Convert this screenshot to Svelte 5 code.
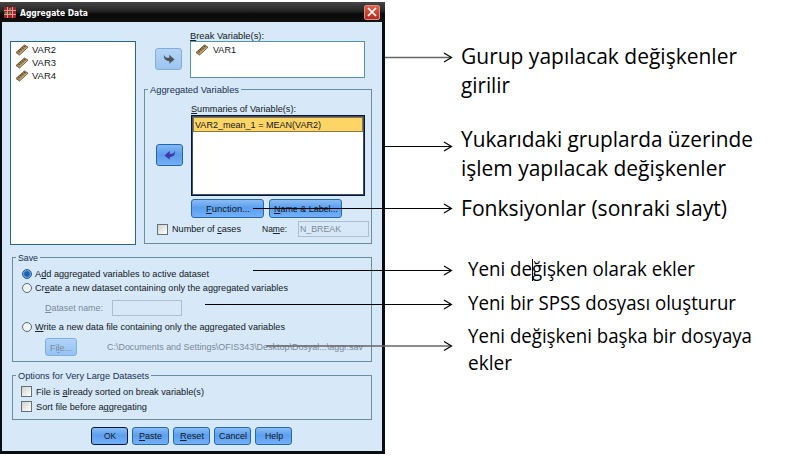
<script>
  const files = ['VAR2', 'VAR3', 'VAR4'];
  const actions = [
    { text: 'OK', width: 12, primary: true },
    { text: '~Paste', width: 23 },
    { text: '~Reset', width: 24 },
    { text: 'Cancel', width: 28 },
    { text: 'Help', width: 18 }
  ];
  const arrows = [
    { y: 57.5, from: 385, soft: true },
    { y: 146.5, from: 385 },
    { y: 208.5, from: 253 },
    { y: 270.5, from: 253 },
    { y: 304.5, from: 205 },
    { y: 346, from: 266, soft: true }
  ];
  // "~" marks the letter that is the keyboard mnemonic
  function split(text) {
    const i = text.indexOf('~');
    return i < 0 ? [text, '', ''] : [text.slice(0, i), text[i + 1], text.slice(i + 2)];
  }
</script>

{#snippet label(text, width)}
  {@const p = split(text)}
  <svg class="label" {width} height="12"><text x="0" y="9" textLength={width} lengthAdjust="spacingAndGlyphs">{p[0]}<tspan class="key">{p[1]}</tspan>{p[2]}</text></svg>
{/snippet}

{#snippet note(text, width)}
  <svg class="note" {width} height="29"><text x="0" y="22" textLength={width} lengthAdjust="spacingAndGlyphs">{text}</text></svg>
{/snippet}

{#snippet ruler()}
  <svg class="ruler" width="14" height="12" viewBox="0 0 14 12">
    <path d="M1 8.5 9.5 1 13 3.2 4.5 11Z" fill="#a88a58" stroke="#65502f" stroke-width=".9" />
    <path d="M3.2 6.8l1.7 1M5 5.2l1.7 1M6.8 3.6l1.7 1M8.6 2l1.7 1" stroke="#3f301c" stroke-width=".8" />
    <path d="M4.6 9.6 12 3.3" stroke="#d9c497" stroke-width=".8" />
  </svg>
{/snippet}

<div class="page">
  <div class="dialog">
    <div class="title">
      <svg width="12" height="11" viewBox="0 0 12 11">
        <rect width="12" height="11" fill="#a3202b" />
        <path d="M0 3.5h12M0 7.5h12M3.5 0v11M8.5 0v11" stroke="#e9a0a0" stroke-width=".9" />
        <path d="M5 1h2v2H5zM5 5h2v2H5zM1 5h2v2H1z" fill="#45a443" />
      </svg>
      <svg class="caption" width="68" height="14"><text x="0" y="10.5" textLength="68" lengthAdjust="spacingAndGlyphs">Aggregate Data</text></svg>
      <div class="close">
        <svg width="10" height="10" viewBox="0 0 10 10"><path d="M1 1l8 8M9 1L1 9" stroke="#fff" stroke-width="1.7" /></svg>
      </div>
    </div>

    <div class="top">
      <div class="list">
        {#each files as name}
          <div class="item">{@render ruler()}{@render label(name, 24)}</div>
        {/each}
      </div>
      <div class="right">
        <div class="break">
          <div class="move idle">
            <svg width="14" height="12" viewBox="0 0 14 12"><path d="M2 1.5C2.5 4.3 4.3 5 7.3 4.8V1.8L12.5 6.5 7.3 10.8V8C3.6 8 1.3 5.6 2 1.5Z" fill="#4c5560" /></svg>
          </div>
          <div class="stack">
            {@render label('~Break Variable(s):', 74)}
            <div class="breakbox">{@render ruler()}{@render label('VAR1', 23)}</div>
          </div>
        </div>
        <div class="group agg">
          <div class="legend">{@render label('Aggregated Variables', 89)}</div>
          <div class="summary">
            <div class="move">
              <svg width="14" height="12" viewBox="0 0 14 12"><path d="M12 1.5C11.5 4.3 9.7 5 6.7 4.8V1.8L1.5 6.5 6.7 10.8V8C10.4 8 12.7 5.6 12 1.5Z" fill="#4438a8" /></svg>
            </div>
            <div class="stack">
              {@render label('~Summaries of Variable(s):', 105)}
              <div class="sumbox"><div class="selected">{@render label('VAR2_mean_1 = MEAN(VAR2)', 126)}</div></div>
              <div class="pair">
                <div class="button wide">{@render label('~Function...', 44)}</div>
                <div class="button wide">{@render label('~Name & Label...', 64)}</div>
              </div>
            </div>
          </div>
          <div class="cases">
            <i class="check"></i>
            {@render label('Number of ~cases', 69)}
            <span class="name">{@render label('Na~me:', 25)}</span>
            <div class="field nbreak">{@render label('N_BREAK', 41)}</div>
          </div>
        </div>
      </div>
    </div>

    <div class="group save">
      <div class="legend">{@render label('Save', 20)}</div>
      <div class="row first"><i class="radio on"></i>{@render label('A~dd aggregated variables to active dataset', 174)}</div>
      <div class="row second"><i class="radio"></i>{@render label('Cr~eate a new dataset containing only the aggregated variables', 253)}</div>
      <div class="row dataset muted">{@render label('~Dataset name:', 58)}<div class="field blank"></div></div>
      <div class="row third"><i class="radio"></i>{@render label('~Write a new data file containing only the aggregated variables', 250)}</div>
      <div class="row path muted">
        <div class="button file">{@render label('Fi~le...', 22)}</div>
        {@render label('C:\\Documents and Settings\\OFIS343\\Desktop\\Dosyal...\\aggr.sav', 256)}
      </div>
    </div>

    <div class="group options">
      <div class="legend">{@render label('Options for Very Large Datasets', 131)}</div>
      <div class="row"><i class="check"></i>{@render label('File is ~already sorted on break variable(s)', 168)}</div>
      <div class="row"><i class="check"></i>{@render label('Sort file before a~ggregating', 111)}</div>
    </div>

    <div class="actions">
      {#each actions as a}
        <div class="button" class:primary={a.primary}>{@render label(a.text, a.width)}</div>
      {/each}
    </div>
  </div>

  <div class="notes">
    <div class="big">
      {@render note('Gurup yapılacak değişkenler', 276)}
      {@render note('girilir', 49)}
    </div>
    <div class="big second">
      {@render note('Yukarıdaki gruplarda üzerinde', 292)}
      {@render note('işlem yapılacak değişkenler', 265)}
    </div>
    <div class="big third">{@render note('Fonksiyonlar (sonraki slayt)', 266)}</div>
    <div class="small one">{@render note('Yeni değişken olarak ekler', 227)}</div>
    <div class="small two">{@render note('Yeni bir SPSS dosyası oluşturur', 268)}</div>
    <div class="small three">
      {@render note('Yeni değişkeni başka bir dosyaya', 284)}
      {@render note('ekler', 44)}
    </div>
  </div>

  <svg class="overlay" width="786" height="460" viewBox="0 0 786 460" fill="none">
    {#each arrows as a}
      <path d="M{a.from} {a.y}H451" stroke={a.soft ? '#666' : '#000'} stroke-width={a.soft ? 1.5 : 1} />
      <path d="M444 {a.y - 4.5}L451.5 {a.y}L444 {a.y + 4.5}" stroke="#000" stroke-width="1.2" />
    {/each}
    <path d="M532.5 259v22" stroke="#000" />
  </svg>
</div>

<style>
  .page { position: relative; display: flex; width: 786px; height: 460px; background: #fff; overflow: hidden; }
  .page, .page div, .page i { box-sizing: border-box; }
  svg { display: block; flex: none; overflow: visible; }
  .label { font: 9.4px 'Liberation Sans', Arial, sans-serif; fill: #111820; }
  .key { text-decoration: underline; }
  .muted .label, .nbreak .label { fill: #7b8995; }
  .dialog { width: 385px; height: 452px; margin-top: 2px; flex: none; background: #d7e8f9; border: solid #080d14; border-width: 0 3px 3px 2px; }
  .title { display: flex; align-items: center; height: 20px; margin: 0 -3px 0 -2px; padding: 0 5px 0 4px; background: linear-gradient(#464646, #252525 45%, #090909 60%, #111); }
  .caption { margin-left: 4px; font: bold 9px 'DejaVu Sans', sans-serif; fill: #fff; }
  .close { display: flex; align-items: center; justify-content: center; width: 16px; height: 15px; margin-left: auto; border: 1px solid #de8b80; border-radius: 2px; background: linear-gradient(#d9644f, #b62b20); }
  .top { display: flex; padding-left: 8px; height: 235px; }
  .list { width: 126px; height: 204px; margin-top: 19px; padding: 1px 0 0 4px; background: #fff; border: 1px solid #27678a; }
  .item { display: flex; align-items: center; height: 13px; gap: 3px; }
  .right { margin-left: 8px; width: 228px; }
  .break { display: flex; height: 67px; padding: 8px 0 0 11px; }
  .break .stack { margin-left: 8px; }
  .break .label { margin-bottom: -1px; }
  .move { display: flex; align-items: center; justify-content: center; width: 27px; height: 22px; border: 1px solid #2466ae; border-radius: 3px; background: linear-gradient(#82b8f3, #5b9cec 50%, #75b0f5); }
  .idle { margin-top: 18px; border-color: #82add6; background: linear-gradient(#b5d4f5, #9cc5f1); }
  .breakbox { display: flex; align-items: flex-start; width: 175px; height: 37px; margin-top: 0; padding: 2px 0 0 4px; gap: 4px; background: #fff; border: 1px solid #5692a9; }
  .group { display: flow-root; border: 1px solid #688f9f; }
  .legend { width: fit-content; margin: -6px 0 0 3px; padding: 0 2px; height: 12px; background: #d7e8f9; }
  .legend .label { fill: #17314e; }
  .agg { width: 228px; height: 155px; }
  .summary { display: flex; margin: 7px 0 0 11px; }
  .summary .move { margin-top: 41px; }
  .summary .stack { margin-left: 8px; }
  .sumbox { width: 174px; height: 81px; padding: 1px 1px 0; margin-top: 0; background: #fff; border: 1px solid #0b1434; box-shadow: inset 0 0 0 1px #405070; }
  .selected { height: 15px; padding: 1px; background: #fcd566; border: 1px solid #8b783d; }
  .pair { display: flex; gap: 5px; margin-top: 3px; }
  .button { display: flex; align-items: center; justify-content: center; width: 37px; height: 18px; border: 1px solid #2569ad; border-radius: 3px; background: linear-gradient(#8abcf5, #5c9fef 45%, #73b0f8); }
  .wide { width: 73px; height: 19px; }
  .primary { border-color: #061a3c; }
  .cases { display: flex; align-items: center; margin: 3px 0 0 12px; height: 16px; }
  .check { width: 11px; height: 11px; flex: none; margin-right: 4px; background: linear-gradient(135deg, #d2d2ca, #fff); border: 1px solid #65717a; }
  .name { margin-left: 21px; }
  .field { border: 1px solid #a9bfd2; }
  .nbreak { width: 71px; height: 16px; margin-left: 11px; padding: 1px; }
  .save, .options { width: 360px; margin-left: 10px; }
  .save { height: 105px; }
  .row { display: flex; align-items: center; height: 14px; margin-left: 9px; }
  .radio { width: 10px; height: 10px; flex: none; margin-right: 3px; border-radius: 50%; background: #f3f5f5; border: 1.5px solid #526a83; }
  .on { background: radial-gradient(#1d63b5 0 40%, #81b8f0 70%); border-color: #2a5688; }
  .save .first { margin-top: 3px; }
  .dataset { margin: 5px 0 0 32px; height: 16px; }
  .blank { width: 70px; height: 16px; margin-left: 9px; }
  .third { margin-top: 4px; }
  .path { margin: 4px 0 0 32px; height: 18px; }
  .file { width: 32px; margin-right: 30px; border-color: #7dafe0; background: linear-gradient(#b1d3f8, #94c2f4); }
  .file .label { margin-top: 1px; }
  .options { height: 45px; margin-top: 13px; }
  .options .row { height: 15px; margin-left: 8px; }
  .options .legend + .row { margin-top: 2px; }
  .actions { display: flex; gap: 4px; margin: 7px 0 0 89px; }
  .notes { padding: 42px 0 0 76px; font-family: 'Open Sans', 'Noto Sans', sans-serif; }
  .note { font: 21px 'Open Sans', 'Noto Sans', sans-serif; fill: #000; }
  .second.big { margin-top: 25px; }
  .third.big { margin-top: 11px; }
  .small { margin-left: 7px; }
  .small .note { font-size: 19.5px; height: 27px; }
  .one { margin-top: 31px; }
  .two { margin-top: 7px; }
  .three { margin-top: 6px; }
  .overlay { position: absolute; left: 0; top: 0; }
</style>
